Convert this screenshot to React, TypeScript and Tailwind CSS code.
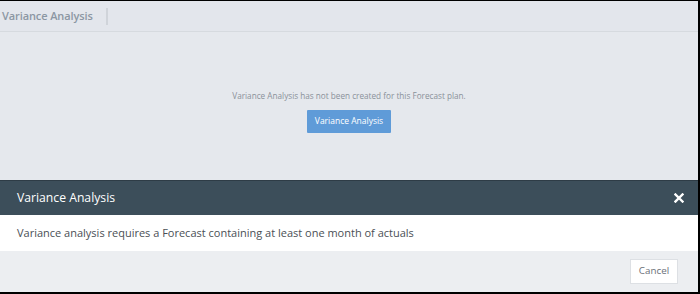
import React from "react";

export default function App() {
  return (
    <div
      className="w-[700px] h-[294px] overflow-hidden bg-[#e4e7ec] border-t border-t-black border-r-2 border-r-black border-b-2 border-b-black flex flex-col"
      style={{ fontFamily: '"Open Sans", "Noto Sans", sans-serif' }}
    >
      <div className="h-[31px] shrink-0 flex items-center bg-[#e3e6ec] border-b border-[#d6dadf]">
        <span className="pl-[2px] text-[11px] font-semibold text-[#8c97a3] tracking-[-0.1px]">Variance Analysis</span>
        <div className="ml-[13px] w-[2px] h-[17px] bg-[#d0d4da]" />
      </div>
      <div className="h-[148px] shrink-0 flex flex-col items-center pt-[58px] bg-[#e5e8ed]">
        <div className="text-[8.2px] text-[#8a919a] leading-[12px]">
          Variance Analysis has not been created for this Forecast plan.
        </div>
        <div className="mt-[8px] w-[84px] h-[23px] bg-[#5f9bd8] rounded-[1px] flex items-center justify-center text-white text-[8.5px]">
          Variance Analysis
        </div>
      </div>
      <div className="flex-1 flex flex-col">
        <div className="h-[35px] bg-[#3c4e5a] flex items-center justify-between pl-[17px] pr-[14px] border-t border-[#2e3c46]">
          <span className="text-white text-[12.2px]">Variance Analysis</span>
          <svg width="10" height="10" viewBox="0 0 10 10">
            <path d="M1.5 1.5 L8.5 8.5 M8.5 1.5 L1.5 8.5" stroke="white" strokeWidth="2.4" strokeLinecap="square" />
          </svg>
        </div>
        <div className="h-[36px] bg-white flex items-center pl-[17px] text-[11px] text-[#4a4f55]">
          Variance analysis requires a Forecast containing at least one month of actuals
        </div>
        <div className="flex-1 bg-[#eceef1] flex justify-end items-start pt-[8px] pr-[20px]">
          <div className="w-[48px] h-[25px] bg-white border border-[#dde0e4] flex items-center justify-center text-[9.8px] text-[#6a7079]">
            Cancel
          </div>
        </div>
      </div>
    </div>
  );
}
